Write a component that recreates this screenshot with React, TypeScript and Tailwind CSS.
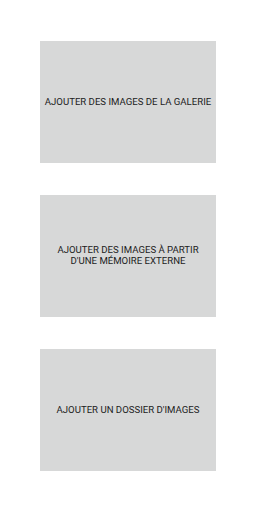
export default function App() {
  const items = [
    ["AJOUTER DES IMAGES DE LA GALERIE"],
    ["AJOUTER DES IMAGES À PARTIR", "D'UNE MÉMOIRE EXTERNE"],
    ["AJOUTER UN DOSSIER D'IMAGES"],
  ];
  return (
    <div className="w-[256px] h-[512px] bg-white flex flex-col items-center pt-[41px] gap-[32px]" style={{ fontFamily: "Roboto, sans-serif" }}>
      {items.map((lines, i) => (
        <button
          key={i}
          className="w-[176px] h-[122px] bg-[#d7d8d8] flex flex-col items-center justify-center text-[9.6px] leading-[10.7px] text-[#1c1c1c] text-center"
        >
          {lines.map((l, j) => (
            <span key={j}>{l}</span>
          ))}
        </button>
      ))}
    </div>
  );
}
